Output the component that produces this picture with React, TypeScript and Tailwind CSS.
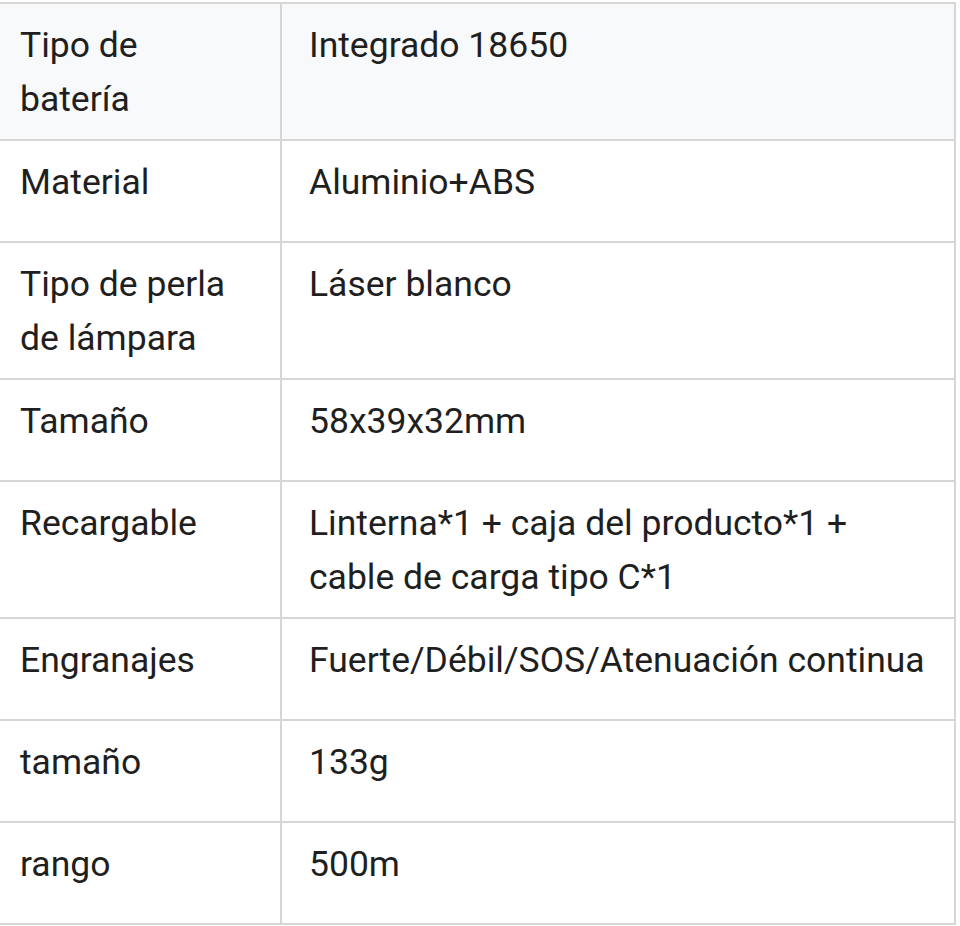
import React from 'react'

const rows: [string, string][] = [
  ['Tipo de batería', 'Integrado 18650'],
  ['Material', 'Aluminio+ABS'],
  ['Tipo de perla de lámpara', 'Láser blanco'],
  ['Tamaño', '58x39x32mm'],
  ['Recargable', 'Linterna*1 + caja del producto*1 + cable de carga tipo C*1'],
  ['Engranajes', 'Fuerte/Débil/SOS/Atenuación continua'],
  ['tamaño', '133g'],
  ['rango', '500m'],
]

export default function App() {
  return (
    <div className="w-[960px] h-[926px] bg-white overflow-hidden pt-[2px]" style={{ fontFamily: 'Roboto, "Liberation Sans", sans-serif' }}>
      <table className="ml-[-10px] w-[966px] border-collapse text-[35.5px] leading-[54px] text-[#1f1f1f]">
        <tbody>
          {rows.map(([k, v], i) => (
            <tr key={i} className={i === 0 ? 'bg-[#f8f9fa]' : 'bg-white'}>
              <td className="w-[290px] h-[102px] align-top border-2 border-[#d6d6d6] pl-[28px] pr-[41px] pt-[14px] pb-[13px]">{k}</td>
              <td className="align-top border-2 border-[#d6d6d6] pl-[27px] pr-[24px] pt-[14px] pb-[13px]">{v}</td>
            </tr>
          ))}
        </tbody>
      </table>
    </div>
  )
}
